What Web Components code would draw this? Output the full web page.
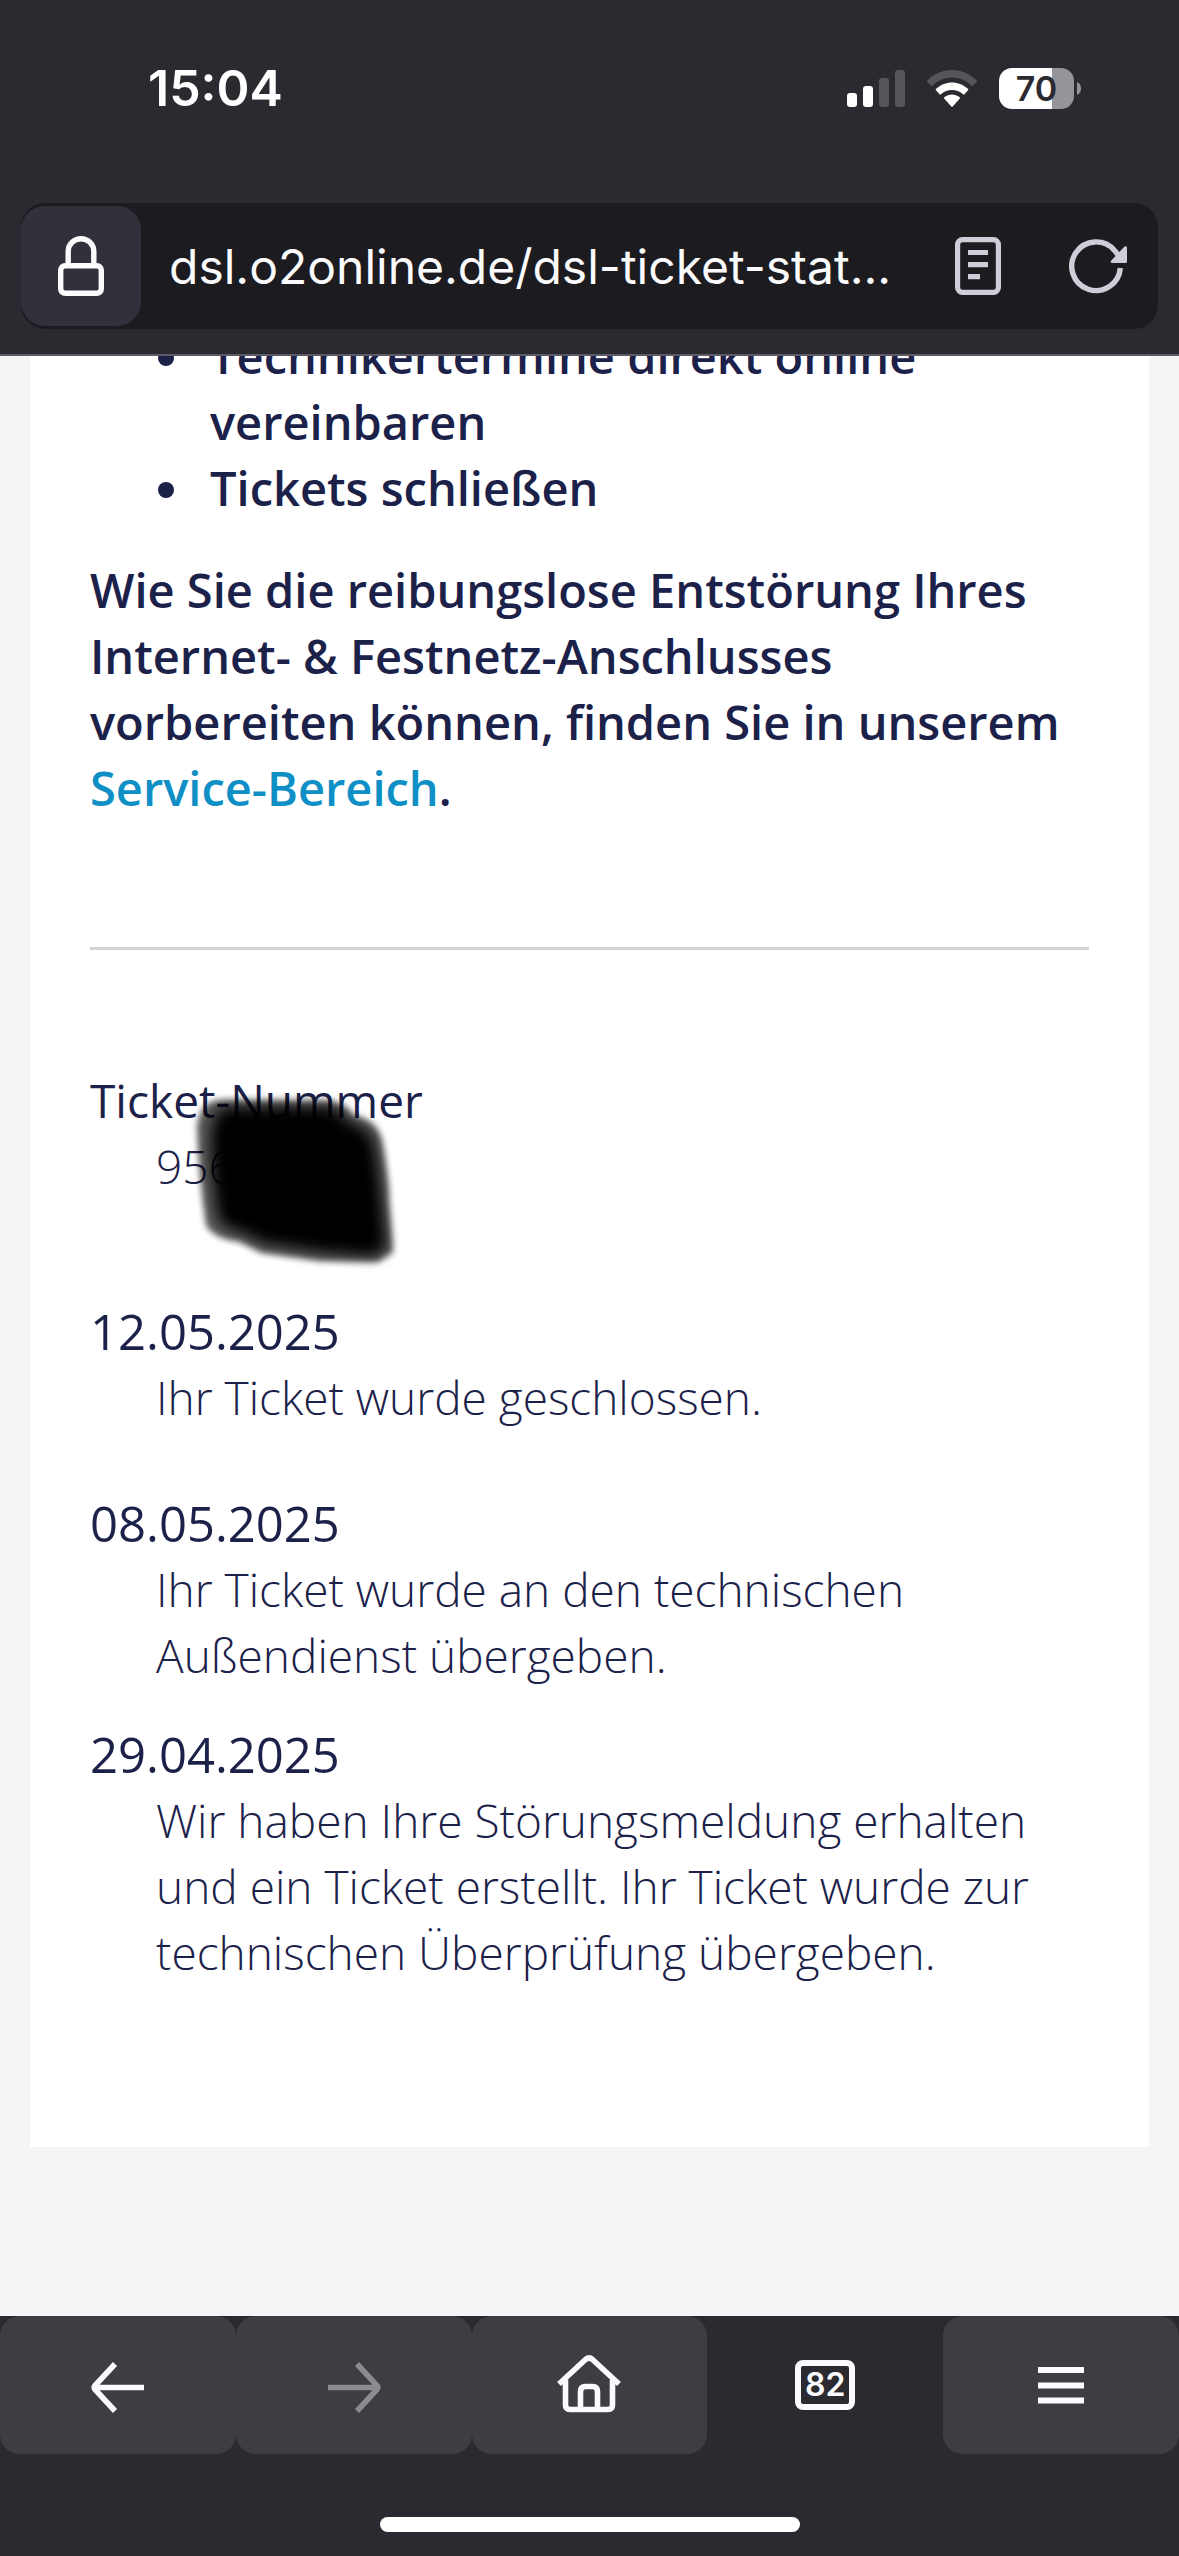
<!DOCTYPE html>
<html lang="de">
<head>
<meta charset="utf-8">
<meta name="viewport" content="width=device-width, initial-scale=1">
<title>o2 DSL Ticket-Status</title>
<style>
  html, body { margin: 0; height: 100%; }
  body { background: #2b2a30; overflow: hidden; }
</style>
</head>
<body>
<phone-screen>
  <status-bar slot="top" time="15:04" battery="70"></status-bar>
  <address-bar slot="top" url="dsl.o2online.de/dsl-ticket-stat..."></address-bar>
  <ticket-page></ticket-page>
  <nav-bar slot="bottom" tabs="82"></nav-bar>
</phone-screen>

<script>
const define = (name, render) => customElements.define(name, class extends HTMLElement {
  connectedCallback() {
    if (this.shadowRoot) return;
    this.attachShadow({ mode: 'open' }).innerHTML = render(this);
  }
});

define('phone-screen', () => `
<style>
  :host { display: flex; flex-direction: column; height: 100vh; background: #2b2a30; }
  header { border-bottom: 2px solid #5b5a66; }
  main { flex: 1; min-height: 0; overflow: hidden; background: #f3f5f7; }
</style>
<header><slot name="top"></slot></header>
<main><slot></slot></main>
<footer><slot name="bottom"></slot></footer>`);

define('status-bar', el => `
<style>
  :host { display: flex; align-items: center; justify-content: space-between; height: 176px; padding: 0 98px 0 148px;
    color: #fff; font: 600 50px/60px Inter, sans-serif; }
  .icons { display: flex; align-items: center; gap: 22px; }
  svg { display: block; }
  .battery { display: flex; align-items: center; gap: 3px; }
  .cell { width: 75px; height: 41px; border-radius: 13px; color: #2b2a30; text-align: center;
    background: linear-gradient(90deg, #fff 71%, #959499 71%); font: 600 34px/41px Inter, sans-serif; }
</style>
<span>${el.getAttribute('time')}</span>
<div class="icons">
  <svg width="58" height="37" viewBox="0 0 58 37" fill="#fff">
    <rect y="23" width="10" height="14" rx="3"/><rect x="16" y="16" width="10" height="21" rx="3"/>
    <g fill="#56555b"><rect x="32" y="8" width="10" height="29" rx="3"/><rect x="48" width="10" height="37" rx="3"/></g>
  </svg>
  <svg width="50" height="37" viewBox="0 0 50 37" fill="#fff">
    <path fill="#56555b" d="M.7 12.3a1.3 1.3 0 0 1 0-2.1C7.400 3.600 15.800 0 25 0s17.600 3.600 24.300 10.200a1.300 1.300 0 0 1 0 2.100l-3.100 3.100a1.300 1.300 0 0 1-1.900 0C38.900 10.300 32.200 7.500 25 7.500S11.100 10.300 5.700 15.400a1.300 1.300 0 0 1-1.900 0z"/>
    <path d="M9.100 20.600a1.300 1.300 0 0 1 0-1.900C13.400 14.700 19 12.400 25 12.400s11.600 2.300 15.900 6.300a1.300 1.300 0 0 1 0 1.900l-3.300 3.300a1.300 1.300 0 0 1-1.900 0C32.900 21.300 29.100 20 25 20s-7.900 1.300-10.700 3.900a1.300 1.300 0 0 1-1.900 0z"/>
    <path d="M17.600 29a1.300 1.300 0 0 1 0-2c2.100-1.600 4.700-2.500 7.400-2.500s5.300.9 7.400 2.500a1.300 1.300 0 0 1 0 2l-6.500 7.200a1.200 1.200 0 0 1-1.800 0z"/>
  </svg>
  <div class="battery">
    <div class="cell">${el.getAttribute('battery')}</div>
    <svg width="4" height="13" viewBox="0 0 4 13"><path fill="#959499" d="M0 0c2.500 1 4 3.500 4 6.500S2.500 12 0 13z"/></svg>
  </div>
</div>`);

define('address-bar', el => `
<style>
  :host { display: block; padding: 27px 21px 25px; }
  .field { display: flex; align-items: center; height: 126px; border-radius: 24px; background: #1c1b20; }
  button { display: grid; place-items: center; width: 120px; height: 120px; padding: 0; border: 0; background: none; border-radius: 24px; }
  .lock { background: #32313b; }
  input { flex: 1; min-width: 0; height: 80px; margin: 0; padding: 0 0 0 28px; border: 0; outline: 0; background: none;
    color: #fbfbfe; font: 400 48px/60px Inter, sans-serif; }
</style>
<div class="field">
  <button class="lock" aria-label="Verbindungssicherheit">
    <svg width="46" height="60" viewBox="0 0 46 60" fill="none" stroke="#fbfbfe" stroke-width="5.400">
      <rect x="2.700" y="29.700" width="40.600" height="27.600" rx="4.500"/><path d="M10.200 29.700V15.500a12.800 12.800 0 0 1 25.600 0v14.200"/>
    </svg>
  </button>
  <input type="text" aria-label="Adresse" value="${el.getAttribute('url')}">
  <button aria-label="Leseansicht">
    <svg width="46" height="58" viewBox="0 0 46 58" fill="none" stroke="#cfced8" stroke-width="5.200">
      <rect x="2.600" y="2.600" width="40.800" height="52.800" rx="5"/><path d="M13 15.500h20M13 27.700h20M13 39.700h12"/>
    </svg>
  </button>
  <button aria-label="Neu laden">
    <svg width="58" height="58" viewBox="0 0 58 58">
      <path d="M51.300 31A24.300 24.300 0 1 1 45.500 13.400L50 19" fill="none" stroke="#cfced8" stroke-width="5.400"/>
      <path fill="#cfced8" d="M43.500 26h13a1.500 1.500 0 0 0 1.500-1.500V11c0-2-1.700-2.200-2.700-1.200L42.300 23.500c-1 1-.8 2.500 1.200 2.500z"/>
    </svg>
  </button>
</div>`);

define('ticket-page', () => `
<style>
  :host { display: block; padding: 0 30px; }
  .card { background: #fff; padding: 0 60px 162px; margin-top: -33px; color: #1b2149;
    font: 300 46px/66px "Open Sans", "Noto Sans", sans-serif; }
  .intro { font-size: 47px; font-weight: 600; }
  ul { list-style: none; margin: 0 0 36px; padding: 0 0 0 68px; }
  li { display: flex; gap: 36px; }
  li::before { content: ""; flex: none; width: 16px; height: 16px; margin-top: 27px; border-radius: 50%; background: currentColor; }
  p { margin: 0; }
  a { color: #0e8fc6; text-decoration: none; }
  hr { height: 3px; border: 0; margin: 126px 0 117px; background: #d3d6d6; }
</style>
<article class="card">
  <div class="intro">
    <ul>
      <li>Technikertermine direkt online vereinbaren</li>
      <li>Tickets schließen</li>
    </ul>
    <p>Wie Sie die reibungslose Entstörung Ihres Internet- &amp; Festnetz-Anschlusses vorbereiten können, finden Sie in unserem <a href="#service">Service-Bereich</a>.</p>
  </div>
  <hr>
  <ticket-entry style="--gap:99px"><span slot="term">Ticket-Nummer</span>956<redaction-mark></redaction-mark></ticket-entry>
  <ticket-entry date style="--gap:60px"><span slot="term">12.05.2025</span>Ihr Ticket wurde geschlossen.</ticket-entry>
  <ticket-entry date style="--gap:33px"><span slot="term">08.05.2025</span>Ihr Ticket wurde an den technischen Außendienst übergeben.</ticket-entry>
  <ticket-entry date><span slot="term">29.04.2025</span>Wir haben Ihre Störungsmeldung erhalten und ein Ticket erstellt. Ihr Ticket wurde zur technischen Überprüfung übergeben.</ticket-entry>
</article>`);

define('ticket-entry', () => `
<style>
  :host { display: block; margin-bottom: var(--gap, 0); }
  dl, dd { margin: 0; }
  dt { font-weight: 400; }
  :host([date]) dt { font-size: 49px; }
  dd { position: relative; padding-left: 66px; }
</style>
<dl><dt><slot name="term"></slot></dt><dd><slot></slot></dd></dl>`);

/* Soft brush stroke over the rest of the ticket number: a translucent rim round an opaque core. */
define('redaction-mark', () => `
<style>
  :host { position: absolute; left: 90px; top: -53px; }
  svg { display: block; overflow: visible; }
</style>
<svg width="230" height="200" viewBox="180 1080 230 200" aria-hidden="true">
  <filter id="rim" x="-20%" y="-20%" width="140%" height="140%"><feGaussianBlur stdDeviation="3"/></filter>
  <filter id="core" x="-20%" y="-20%" width="140%" height="140%"><feGaussianBlur stdDeviation="7"/></filter>
  <path filter="url(#rim)" opacity=".65" d="M197 1128Q199 1101 220 1100L330 1101Q345 1103 353 1115Q377 1120 382 1140Q389 1180 389 1200L393 1252L378 1262L320 1261L262 1253L240 1242Q212 1238 206 1225Q199 1180 197 1128z"/>
  <path filter="url(#core)" d="M211 1140Q212 1108 228 1107L326 1107Q340 1109 348 1122Q369 1127 374 1145Q380 1180 381 1200L386 1247L374 1256L322 1252L264 1243L242 1232Q222 1228 218 1216Q212 1180 211 1140z"/>
</svg>`);

define('nav-bar', el => `
<style>
  :host { display: block; height: 240px; background: #2b2a30; }
  nav { display: flex; height: 138px; }
  button { flex: 1; display: grid; place-items: center; padding: 0; border: 0; border-radius: 20px; background: #3e3d43; }
  .plain { background: none; }
  .tabs { box-sizing: border-box; width: 60px; height: 50px; border: 6px solid #fbfbfe; border-radius: 8px; color: #fbfbfe;
    font: 600 32px/38px Inter, sans-serif; text-align: center; }
  .home { width: 420px; height: 15px; border-radius: 8px; background: #fff; margin: 63px auto 0; }
  svg { display: block; }
</style>
<nav aria-label="Browser">
  <button aria-label="Zurück"><svg width="54" height="60" viewBox="0 0 54 60" fill="none" stroke="#fbfbfe" stroke-width="5.600"><path d="M53 32.500H5M24 9 4 30.500Q2.500 32.500 4 34.500L24 56"/></svg></button>
  <button aria-label="Vor" disabled><svg width="54" height="60" viewBox="0 0 54 60" fill="none" stroke="#8c8b90" stroke-width="5.600"><path d="M1 32.500h48M30 9l20 21.500q1.500 2 0 4L30 56"/></svg></button>
  <button aria-label="Startseite"><svg width="64" height="60" viewBox="0 0 64 60" fill="none" stroke="#fbfbfe" stroke-width="5.600">
    <path d="M2 29 28.500 4.500Q32 1.500 35.500 4.500L62 29M8.500 25V50Q8.500 54.500 13 54.500H51Q55.500 54.500 55.500 50V25M23.500 54V36.500Q23.500 31.500 28.500 31.500H35.500Q40.500 31.500 40.500 36.500V54"/></svg></button>
  <button class="plain" aria-label="Tabs"><div class="tabs">${el.getAttribute('tabs')}</div></button>
  <button aria-label="Menü"><svg width="46" height="38" viewBox="0 0 46 38" stroke="#fbfbfe" stroke-width="6"><path d="M0 4h46M0 19.500h46M0 34.500h46"/></svg></button>
</nav>
<div class="home"></div>`);
</script>
</body>
</html>
